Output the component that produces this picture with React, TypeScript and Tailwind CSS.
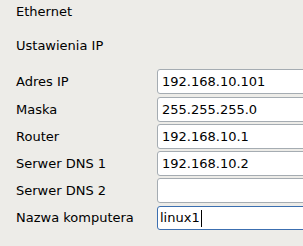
const rows = [
  { label: "Adres IP", value: "192.168.10.101", top: "mt-[69px]" },
  { label: "Maska", value: "255.255.255.0", top: "mt-[3px]" },
  { label: "Router", value: "192.168.10.1", top: "mt-[2px]" },
  { label: "Serwer DNS 1", value: "192.168.10.2", top: "mt-[2px]" },
  { label: "Serwer DNS 2", value: "", top: "mt-[2px]" },
];

export default function App() {
  return (
    <div className="relative w-[303px] h-[246px] overflow-hidden bg-[#edece8] text-[13px] text-black font-['DejaVu_Sans',sans-serif]">
      <div className="absolute left-[16px] top-[3px] leading-[18px]">Ethernet</div>
      <div className="absolute left-[16px] top-[37px] leading-[18px]">Ustawienia IP</div>
      <div className="flex flex-col pl-[16px]">
        {rows.map((r, i) => (
          <div key={i} className={`flex items-center h-[25px] ${r.top}`}>
            <div className="w-[141px] shrink-0">{r.label}</div>
            <div className="w-[170px] shrink-0 h-[25px] border border-[#a5acb2] rounded-[3px] bg-white flex items-center pl-[4px]">
              {r.value}
            </div>
          </div>
        ))}
        <div className="flex items-center h-[24px] mt-[3px]">
          <div className="w-[141px] shrink-0">Nazwa komputera</div>
          <div className="w-[170px] shrink-0 h-[24px] border border-[#3c6fb0] rounded-[3px] bg-white flex items-center pl-[2px]">
            linux1<span className="w-px h-[17px] bg-black ml-px" />
          </div>
        </div>
      </div>
    </div>
  );
}
